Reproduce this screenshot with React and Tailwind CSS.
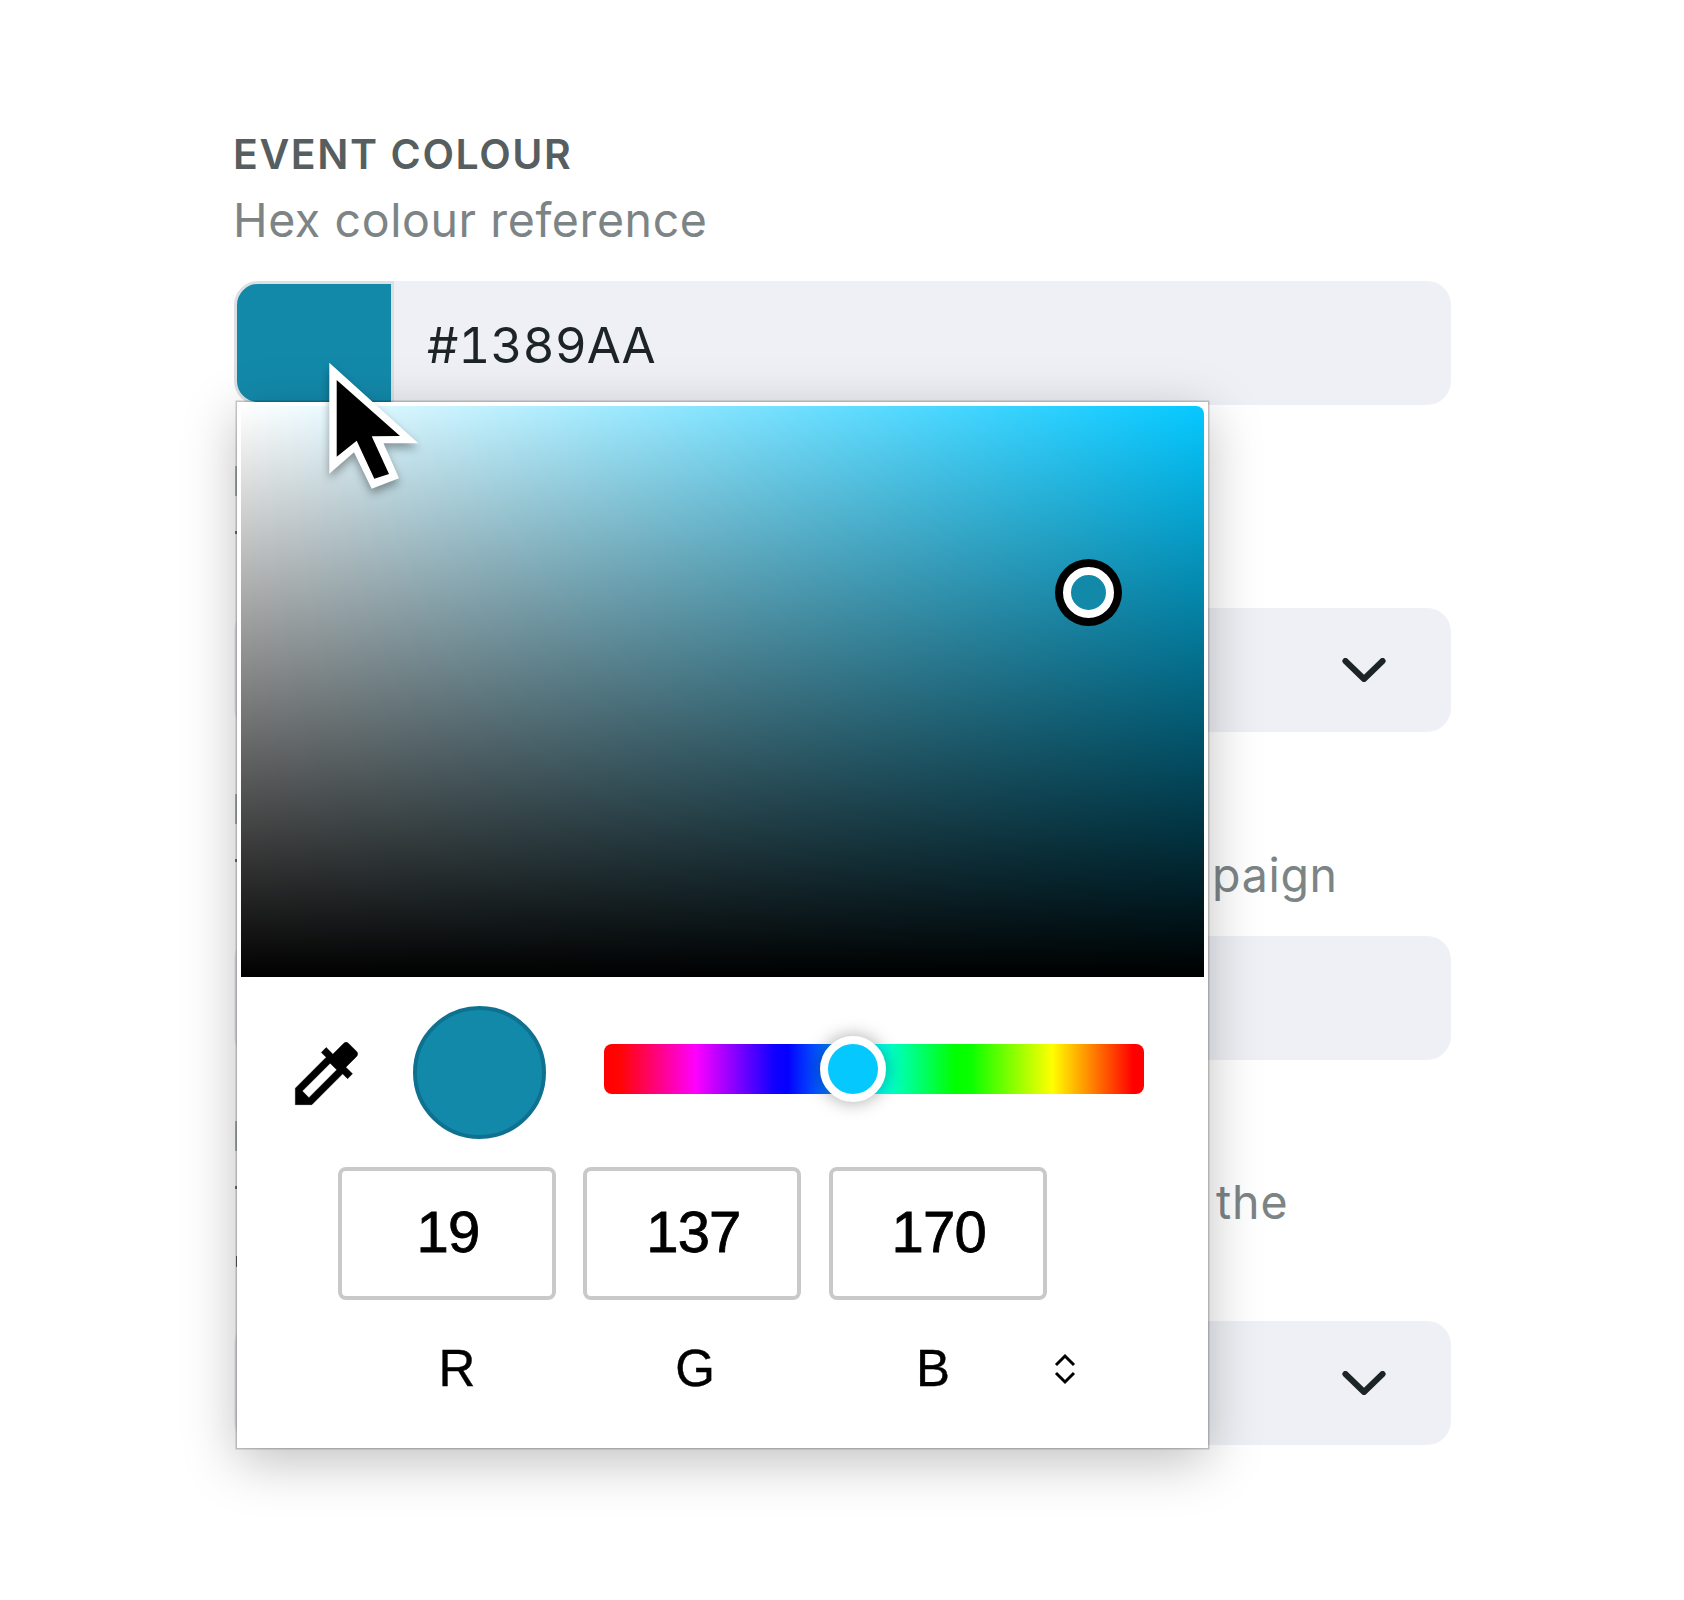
import React from "react";

function Chevron() {
  return (
    <svg className="h-6 w-11" viewBox="0 0 44 24" fill="none" stroke="#1c2426" strokeWidth="6" strokeLinecap="round" strokeLinejoin="round">
      <path d="M3.4 3 L22 21 L40.6 3" />
    </svg>
  );
}

/* Field whose label sits mostly underneath the open colour popover. */
function CoveredField({ hint, hintClass, wrapped, chevron, className }) {
  return (
    <section className={className}>
      <div className="flex h-12 items-center pl-px">
        <div className="h-[30px] w-[2px] bg-[#b4bcbe]" />
      </div>
      <div className="mt-[14px] flex h-14 items-start">
        <div className="mt-[12px] ml-px h-[3px] w-[2px] bg-[#6d787b]" />
        <span className={hintClass}>{hint}</span>
      </div>
      {wrapped && (
        <div className="flex h-[58px] items-center pl-px">
          <div className="mt-1 ml-px h-[11px] w-px bg-[#5d686b]" />
        </div>
      )}
      <div className="mt-[33px] flex h-[124px] items-center justify-end rounded-[24px] bg-[#eff0f5] pr-[65.5px]">
        {chevron && <Chevron />}
      </div>
    </section>
  );
}

function Channel({ value }) {
  return (
    <div className="flex h-[133px] w-[218px] items-center justify-center rounded-[8px] border-4 border-[#c9c9c9] pb-[3px] pl-[2px] text-[58px] leading-none tracking-[-0.8px] [-webkit-text-stroke:0.8px_#000]">
      {value}
    </div>
  );
}

function ColourPopover() {
  return (
    <div className="absolute left-[237px] top-[402px] h-[1046px] w-[971px] bg-white px-1 pt-1 font-['Liberation_Sans',Arial,sans-serif] text-black shadow-[0_0_0_1.5px_rgba(0,0,0,0.2),0_13px_50px_rgba(0,0,0,0.25)]">
      <div className="relative h-[571px] w-[963px] rounded-t-[8px] bg-[linear-gradient(to_top,#000,transparent),linear-gradient(to_right,#fff,#05c8ff)]">
        <div className="absolute left-[814px] top-[153px] size-[67px] rounded-full bg-black p-2">
          <div className="size-full rounded-full border-[8.5px] border-white bg-[#1389aa]" />
        </div>
      </div>
      <div className="mt-[29px] flex h-[133px] items-center">
        <svg className="ml-[44px] mt-px size-[83px] shrink-0" viewBox="0 0 24 24" fill="#000" stroke="#000" strokeWidth="0.15">
          <path d="M20.71 5.63l-2.34-2.34c-.39-.39-1.02-.39-1.41 0l-3.12 3.12-1.93-1.91-1.41 1.41 1.42 1.42L3 16.25V21h4.75l8.92-8.92 1.42 1.42 1.41-1.41-1.92-1.92 3.12-3.12c.4-.4.4-1.03.01-1.42zM6.92 19L5 17.08l8.06-8.06 1.92 1.92L6.92 19z" />
        </svg>
        <div className="ml-[45px] size-[133px] shrink-0 rounded-full border-4 border-[#0f7190] bg-[#1389aa]" />
        <div className="relative mb-[7px] ml-[58px] h-[50px] w-[540px] rounded-[8px] bg-[linear-gradient(to_right,#f00_0%,#ff0505_3%,#f0f_17%,#1000ff_31.5%,#0400ff_34%,#0ff_50%,#0f0_65%,#0bff00_68%,#ff0_83%,#f00_98%)]">
          <div className="absolute left-[216px] top-[-8px] size-[66px] rounded-full border-8 border-white bg-[#05c8ff] shadow-[0_0_18px_rgba(0,0,0,0.35)]" />
        </div>
      </div>
      <div className="mt-[28px] ml-[97px] flex gap-[27.4px]">
        <Channel value="19" />
        <Channel value="137" />
        <Channel value="170" />
      </div>
      <div className="mt-[38px] ml-[97px] flex h-[60px] items-center text-[51px] leading-none [-webkit-text-stroke:0.4px_#000]">
        <span className="w-[238px] text-center">R</span>
        <span className="w-[238px] text-center">G</span>
        <span className="w-[238px] text-center">B</span>
        <svg className="ml-[2px] mt-px h-8 w-[22px]" viewBox="0 0 22 32" fill="none" stroke="#000" strokeWidth="3">
          <path d="M2 12 L11 3 L20 12 M2 20 L11 29 L20 20" />
        </svg>
      </div>
    </div>
  );
}

function Cursor() {
  return (
    <svg className="absolute left-[320px] top-[355px] h-[150px] w-[110px] drop-shadow-[0_5px_4px_rgba(0,0,0,0.35)]" viewBox="320 355 110 150">
      <path fill="#fff" d="M329.3 362.7 L418.3 443.3 L383.5 443.3 L399 478.3 L371.7 488.7 L354 452.3 L329.3 473.7Z" />
      <path fill="#000" d="M336.7 380 L400 436 L371.7 436.3 L389 474 L374.3 478.7 L356.7 440.7 L336.7 456.7Z" />
    </svg>
  );
}

export default function App() {
  return (
    <main className="relative h-[1600px] w-[1684px] overflow-hidden bg-white pt-[130px] pl-[234px] font-['Inter',sans-serif]">
      <div className="w-[1217px]">
        <section>
          <h2 className="-ml-px h-12 whitespace-nowrap text-[41px] font-semibold leading-[48px] tracking-[1.6px] text-[#565e60]">EVENT COLOUR</h2>
          <p className="-ml-px mt-[14px] h-14 whitespace-nowrap text-[46.5px] leading-[57px] tracking-[0.6px] text-[#7c8486]">Hex colour reference</p>
          <div className="mt-[33px] flex h-[124px] overflow-hidden rounded-[24px] bg-[#eff0f5]">
            <div className="h-[124px] w-[160px] rounded-l-[24px] border-[3.5px] border-[#dde0e2] bg-[#1389aa]" />
            <span className="ml-[33px] text-[49.5px] leading-[128px] tracking-[0px] tabular-nums text-[#1c2426]">#1389AA</span>
          </div>
        </section>
        <CoveredField className="mt-[52px]" chevron />
        <CoveredField className="mt-[53px]" hint="paign" hintClass="ml-[975px] text-[46.5px] leading-[56px] tracking-[0.7px] text-[#7c8486]" />
        <CoveredField className="mt-[52px]" hint="the" hintClass="ml-[979px] text-[46.5px] leading-[57px] tracking-[0.9px] text-[#7c8486]" wrapped chevron />
      </div>
      <ColourPopover />
      <Cursor />
    </main>
  );
}
